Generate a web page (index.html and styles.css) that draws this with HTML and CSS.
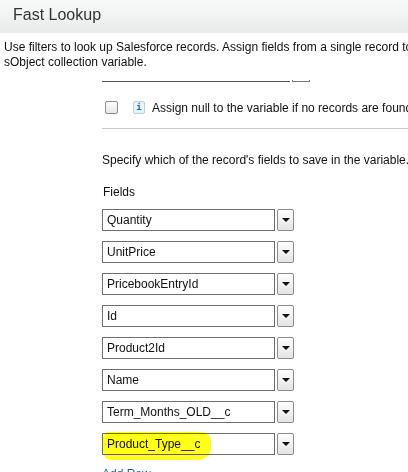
FILE: index.html
```html
<!DOCTYPE html>
<html>
<head>
<meta charset="utf-8">
<link rel="stylesheet" href="styles.css">
</head>
<body>
<div class="header">Fast Lookup</div>
<div class="desc">Use filters to look up Salesforce records. Assign fields from a single record to an sObject variable or from multiple records to an<br>sObject collection variable.</div>
<div class="form">
  <div class="stub"><div class="stub-field"></div><div class="stub-btn"></div></div>
  <div class="check-row">
    <span class="checkbox"></span>
    <span class="info">i</span>
    <span class="check-label">Assign null to the variable if no records are found.</span>
  </div>
  <div class="sep"></div>
  <div class="specify">Specify which of the record's fields to save in the variable.</div>
  <div class="fields-label">Fields</div>
  <div class="rows">
    <div class="row"><div class="box">Quantity</div><div class="btn"><span class="tri"></span></div></div>
    <div class="row"><div class="box">UnitPrice</div><div class="btn"><span class="tri"></span></div></div>
    <div class="row"><div class="box">PricebookEntryId</div><div class="btn"><span class="tri"></span></div></div>
    <div class="row"><div class="box">Id</div><div class="btn"><span class="tri"></span></div></div>
    <div class="row"><div class="box">Product2Id</div><div class="btn"><span class="tri"></span></div></div>
    <div class="row"><div class="box">Name</div><div class="btn"><span class="tri"></span></div></div>
    <div class="row"><div class="box">Term_Months_OLD__c</div><div class="btn"><span class="tri"></span></div></div>
    <div class="row highlighted"><div class="box">Product_Type__c</div><div class="btn"><span class="tri"></span></div><span class="marker"></span></div>
  </div>
  <a class="add-row" href="#">Add Row</a>
</div>
</body>
</html>
```
FILE: styles.css
```css
html, body {
  margin: 0;
  padding: 0;
  background: #fff;
  overflow: hidden;
}
body {
  font-family: "Liberation Sans", Arial, sans-serif;
  font-size: 12px;
  color: #000;
  width: 408px;
  height: 472px;
}
.header {
  box-sizing: border-box;
  height: 33px;
  padding: 3px 13px 0;
  line-height: 24px;
  font-size: 16px;
  color: #333;
  background: linear-gradient(#f8f9f9, #e9ebeb);
}
.desc {
  padding: 7px 4px 0;
  line-height: 15px;
  white-space: nowrap;
  color: #111;
}
.form {
  margin-left: 102px;
  white-space: nowrap;
}
.stub {
  display: flex;
  align-items: flex-end;
  height: 12px;
}
.stub-field {
  width: 188px;
  height: 0;
  border-bottom: 1px solid #555;
}
.stub-btn {
  margin-left: 2px;
  width: 16px;
  height: 1px;
  border: 1px solid #777;
  border-top: none;
}
.check-row {
  display: flex;
  align-items: center;
  margin-top: 19px;
  height: 13px;
}
.checkbox {
  flex-shrink: 0;
  box-sizing: border-box;
  width: 13px;
  height: 13px;
  margin-left: 3px;
  border: 1px solid #8f8f8f;
  border-radius: 2px;
  background: linear-gradient(#ffffff, #e6e6e6);
}
.info {
  flex-shrink: 0;
  box-sizing: border-box;
  width: 12px;
  height: 13px;
  margin-left: 15px;
  border: 1px solid #b9cfe2;
  border-radius: 2px;
  background: #eaf3fb;
  color: #1b62c0;
  font-family: "DejaVu Sans Mono", monospace;
  font-weight: bold;
  font-size: 9px;
  line-height: 11px;
  text-align: center;
}
.check-label {
  flex-shrink: 0;
  margin-left: 7px;
  color: #111;
}
.sep {
  margin-top: 14px;
  height: 1px;
  background: #c8c8c8;
}
.specify {
  margin-top: 24px;
  line-height: 15px;
  color: #111;
}
.fields-label {
  margin-top: 17px;
  margin-left: 1px;
  line-height: 15px;
  color: #111;
}
.rows {
  margin-top: 9px;
  display: flex;
  flex-direction: column;
  gap: 10px;
}
.row {
  position: relative;
  display: flex;
  gap: 2px;
  height: 22px;
}
.box {
  box-sizing: border-box;
  width: 173px;
  height: 22px;
  border: 1px solid #6e6e6e;
  padding-left: 4px;
  line-height: 20px;
  color: #111;
  background: #fff;
}
.btn {
  box-sizing: border-box;
  width: 17px;
  height: 22px;
  border: 1px solid #8c8c8c;
  border-radius: 2px;
  background: linear-gradient(#ffffff, #e4e4e4);
  display: flex;
  align-items: center;
  justify-content: center;
}
.tri {
  width: 0;
  height: 0;
  border-left: 4px solid transparent;
  border-right: 4px solid transparent;
  border-top: 4px solid #111;
}
.marker {
  position: absolute;
  left: 1px;
  top: -1px;
  width: 108px;
  height: 28px;
  background: #ffff1a;
  border-radius: 6px 10px 14px 8px / 6px 8px 12px 10px;
  mix-blend-mode: multiply;
  pointer-events: none;
}
.add-row {
  display: block;
  margin-top: 12px;
  color: #1f5fa8;
  text-decoration: none;
  line-height: 15px;
}
```
